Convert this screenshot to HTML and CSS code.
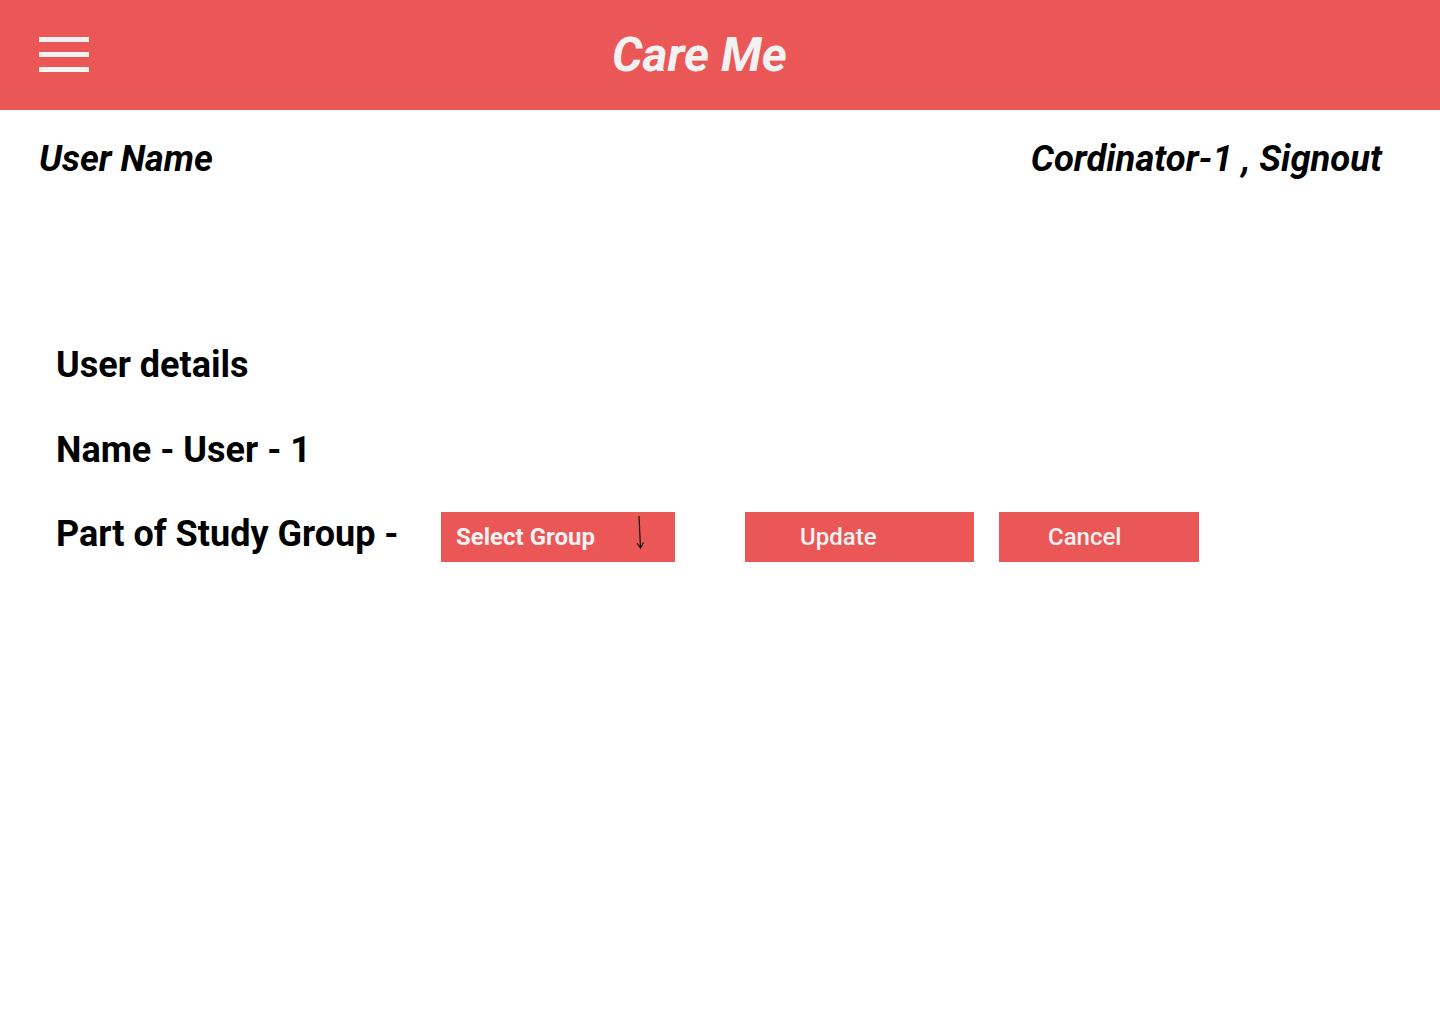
FILE: index.html
```html
<!DOCTYPE html>
<html lang="en">
<head>
<meta charset="utf-8">
<title>Care Me</title>
<link rel="stylesheet" href="styles.css">
</head>
<body>
<header class="topbar">
  <button class="menu" aria-label="Menu">
    <svg width="50" height="40" viewBox="0 0 50 40">
      <rect x="0" y="2" width="50" height="5" fill="#F2F2F2"/>
      <rect x="0" y="17" width="50" height="5" fill="#F2F2F2"/>
      <rect x="0" y="32" width="50" height="5" fill="#F2F2F2"/>
    </svg>
  </button>
  <h1 class="brand">Care Me</h1>
</header>
<div class="userbar">
  <span class="uname">User Name</span>
  <span class="account">Cordinator-1 , Signout</span>
</div>
<main class="details">
  <h2 class="line line-title">User details</h2>
  <p class="line line-name">Name - User - 1</p>
  <div class="group-row">
    <span class="label">Part of Study Group -</span>
    <div class="select">
      <span>Select Group</span>
      <svg class="arrow" width="10" height="36" viewBox="0 0 10 36">
        <path d="M4 1 L5.5 33 M2 28 L5.5 33 L8.5 27.5" fill="none" stroke="#111" stroke-width="1.2"/>
      </svg>
    </div>
    <button class="btn btn-update">Update</button>
    <button class="btn btn-cancel">Cancel</button>
  </div>
</main>
</body>
</html>
```
FILE: styles.css
```css
* { box-sizing: border-box; }
html, body { margin: 0; padding: 0; background: #fff; }
body { font-family: Roboto, "Liberation Sans", sans-serif; color: #000; }

.topbar {
  height: 110px;
  background: #EB5757;
  display: flex;
  align-items: center;
  padding-left: 39px;
}
.menu {
  background: none; border: 0; padding: 0; margin: 0;
  width: 50px; height: 40px; display: block;
}
.menu svg { display: block; }
.brand {
  margin: 0;
  flex: 1;
  text-align: center;
  padding-right: 130px;
  font-size: 48px;
  font-weight: 700;
  font-style: italic;
  color: #F2F2F2;
  line-height: 48px;
}

.userbar {
  display: flex;
  justify-content: space-between;
  padding: 0 58px 0 39px;
  margin-top: 31px;
  font-size: 36px;
  font-weight: 700;
  font-style: italic;
  line-height: 36px;
}
.account { font-size: 36.4px; }

.details {
  padding-left: 56px;
  margin-top: 170px;
}
.line {
  margin: 0;
  font-size: 36px;
  font-weight: 700;
  line-height: 36px;
}
.line-title { margin-bottom: 49px; }
.line-name { margin-bottom: 44px; }
.group-row {
  display: flex;
  align-items: flex-start;
}
.label {
  width: 385px;
  font-size: 36px;
  font-weight: 700;
  line-height: 44px;
}
.select {
  width: 234px;
  height: 50px;
  background: #EB5757;
  color: #F2F2F2;
  font-size: 24px;
  font-weight: 700;
  display: flex;
  align-items: center;
  padding-left: 15px;
  position: relative;
}
.arrow { position: absolute; left: 194px; top: 3px; }
.btn {
  height: 50px;
  border: 0;
  background: #EB5757;
  color: #F2F2F2;
  font-family: Roboto, "Liberation Sans", sans-serif;
  font-size: 24px;
  font-weight: 500;
  text-align: left;
  padding: 0;
}
.btn-update { width: 229px; margin-left: 70px; padding-left: 55px; }
.btn-cancel { width: 200px; margin-left: 25px; padding-left: 49px; }
```
